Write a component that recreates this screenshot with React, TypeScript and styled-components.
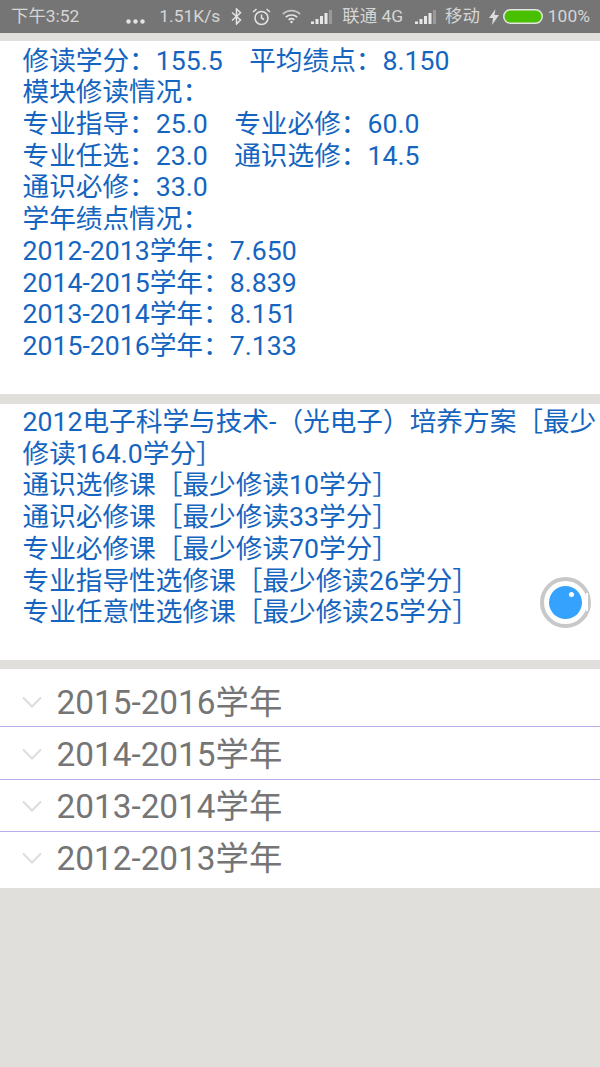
import React from "react";
import styled, { createGlobalStyle } from "styled-components";

const Global = createGlobalStyle`
  html, body { margin: 0; padding: 0; background: #e0dfdc; }
  body { font-family: Roboto, "Noto Sans CJK SC", sans-serif; }
`;
const Page = styled.div`
  width: 600px; height: 1067px; overflow: hidden; background: #e0dfdc;
`;
const StatusBar = styled.div`
  height: 33px; background: #757575; color: #d6d6d6; display: flex; align-items: center;
  font-size: 17.4px; padding: 0 0 0 11px; box-sizing: border-box; white-space: nowrap;
  margin-bottom: 8px;
`;
const StatusText = styled.span<{ $ml?: number }>`
  margin-left: ${p => p.$ml ?? 0}px; line-height: 33px;
`;
const StatusIcon = styled.svg<{ $ml: number; $mt?: number }>`
  margin-left: ${p => p.$ml}px; margin-top: ${p => p.$mt ?? 0}px; flex: none; display: block;
`;
const Card = styled.section<{ $h: number; $mb: number; $pt: number }>`
  height: ${p => p.$h}px; margin-bottom: ${p => p.$mb}px; background: #fff;
  padding: ${p => p.$pt}px 0 0 22.5px; box-sizing: border-box; position: relative;
  color: #1565c0; font-size: 26.67px; line-height: 31.7px;
`;
const Line = styled.div`white-space: pre;`;
const Wrap = styled.div`width: 577px; word-break: break-all;`;
const Float = styled.div`
  position: absolute; left: 540px; top: 172.5px; width: 51px; height: 51px;
  border-radius: 50%; border: 4.5px solid #c8c8c8; box-sizing: border-box;
  background: #fff; display: flex; align-items: center; justify-content: center;
`;
const Ball = styled.div`
  width: 33px; height: 33px; border-radius: 50%; background: #35a2fd; position: relative;
`;
const Glint = styled.div`
  position: absolute; right: 8.5px; top: 6.5px; width: 5px; height: 5px; border-radius: 50%; background: #fff;
`;
const Notch = styled.div`
  position: absolute; right: -1px; top: 12px; width: 2px; height: 18px; background: #fff;
`;
const List = styled.div`background: #fff; height: 219px;`;
const Row = styled.div<{ $h: number; $pt: number; $pb: number; $last?: boolean }>`
  height: ${p => p.$h}px; box-sizing: border-box; display: flex; align-items: center;
  padding: ${p => p.$pt}px 0 ${p => p.$pb}px 22px;
  border-bottom: ${p => (p.$last ? "none" : "1px solid #b9aeee")};
  color: #757575; font-size: 33.33px;
`;
const Chevron = styled.svg`flex: none; margin: 5px 14.5px 0 0; display: block;`;

const Signal = ({ ml }: { ml: number }) => (
  <StatusIcon $ml={ml} width="21" height="14" viewBox="0 0 21 14">
    <rect x="0" y="11.5" width="3" height="2.5" fill="#e8e8e8" />
    <rect x="4.5" y="9" width="3" height="5" fill="#e8e8e8" />
    <rect x="9" y="6" width="3" height="8" fill="#e8e8e8" />
    <rect x="13.5" y="3" width="3" height="11" fill="#e8e8e8" />
    <rect x="18" y="0" width="3" height="14" fill="#9a9a9a" />
  </StatusIcon>
);

const years = ["2015-2016学年", "2014-2015学年", "2013-2014学年", "2012-2013学年"];
const rows = [
  { h: 58, pt: 4, pb: 0 },
  { h: 53, pt: 0, pb: 4 },
  { h: 52, pt: 0, pb: 5 },
  { h: 56, pt: 0, pb: 10 },
];

export default function App() {
  return (
    <Page>
      <Global />
      <StatusBar>
        <StatusText>下午3:52</StatusText>
        <StatusIcon $ml={47} $mt={9} width="19" height="5" viewBox="0 0 19 5">
          <circle cx="2.5" cy="2.5" r="2.2" fill="#e4e4e4" />
          <circle cx="9.5" cy="2.5" r="2.2" fill="#e4e4e4" />
          <circle cx="16.5" cy="2.5" r="2.2" fill="#e4e4e4" />
        </StatusIcon>
        <StatusText $ml={14}>1.51K/s</StatusText>
        <StatusIcon $ml={11} width="11" height="17" viewBox="0 0 11 17" fill="none" stroke="#e4e4e4" strokeWidth="1.5">
          <path d="M1 4.5 9.5 12 5.5 16V1l4 3.8L1 12.5" />
        </StatusIcon>
        <StatusIcon $ml={10} width="19" height="18" viewBox="0 0 19 18" fill="none" stroke="#e4e4e4" strokeWidth="1.5">
          <circle cx="9.5" cy="10" r="6.5" />
          <path d="M9.5 6.5V10l2.5 1.5M1 4l3.5-3M18 4l-3.5-3" />
        </StatusIcon>
        <StatusIcon $ml={11} width="19" height="15" viewBox="0 0 20 15" fill="none" stroke="#e4e4e4">
          <path d="M1 5a13 13 0 0 1 18 0" strokeWidth="1.8" opacity=".75" />
          <path d="M4 8.2a9 9 0 0 1 12 0" strokeWidth="1.8" />
          <path d="M7 11a4.6 4.6 0 0 1 6 0" strokeWidth="1.8" />
          <circle cx="10" cy="13.2" r="1.3" fill="#e4e4e4" stroke="none" />
        </StatusIcon>
        <Signal ml={10} />
        <StatusText $ml={10}>联通 4G</StatusText>
        <Signal ml={12} />
        <StatusText $ml={9}>移动</StatusText>
        <StatusIcon $ml={9} width="10" height="16" viewBox="0 0 10 16">
          <path d="M6.5 0 0 9h4l-1 7 7-10H5.5z" fill="#dcdcdc" />
        </StatusIcon>
        <StatusIcon $ml={4} width="40" height="15" viewBox="0 0 40 15">
          <rect x=".75" y=".75" width="38.5" height="13.5" rx="6.7" fill="#48c000" stroke="#e4e4e4" strokeWidth="1.5" />
        </StatusIcon>
        <StatusText $ml={5}>100%</StatusText>
      </StatusBar>

      <Card $h={353} $mb={10} $pt={4.6}>
        <Line>修读学分：155.5    平均绩点：8.150</Line>
        <Line>模块修读情况：</Line>
        <Line>专业指导：25.0    专业必修：60.0</Line>
        <Line>专业任选：23.0    通识选修：14.5</Line>
        <Line>通识必修：33.0</Line>
        <Line>学年绩点情况：</Line>
        <Line>2012-2013学年：7.650</Line>
        <Line>2014-2015学年：8.839</Line>
        <Line>2013-2014学年：8.151</Line>
        <Line>2015-2016学年：7.133</Line>
      </Card>

      <Card $h={256} $mb={9} $pt={3}>
        <Wrap>2012电子科学与技术-（光电子）培养方案［最少修读164.0学分］</Wrap>
        <Line>通识选修课［最少修读10学分］</Line>
        <Line>通识必修课［最少修读33学分］</Line>
        <Line>专业必修课［最少修读70学分］</Line>
        <Line>专业指导性选修课［最少修读26学分］</Line>
        <Line>专业任意性选修课［最少修读25学分］</Line>
        <Float><Ball><Glint /></Ball><Notch /></Float>
      </Card>

      <List>
        {years.map((y, i) => (
          <Row key={y} $h={rows[i].h} $pt={rows[i].pt} $pb={rows[i].pb} $last={i === 3}>
            <Chevron width="20" height="12" viewBox="0 0 20 12" fill="none" stroke="#dcdcdc" strokeWidth="2">
              <path d="M1 1.5 10 10.5 19 1.5" />
            </Chevron>
            {y}
          </Row>
        ))}
      </List>
    </Page>
  );
}
